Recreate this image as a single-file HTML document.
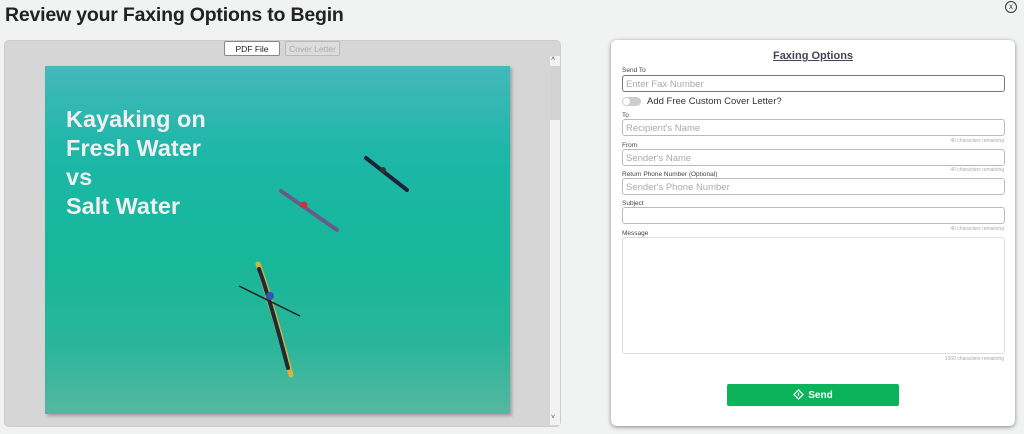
<!DOCTYPE html>
<html><head><style>
*{box-sizing:border-box;margin:0;padding:0}
body{width:1024px;height:434px;background:#f1f2f2;font-family:"Liberation Sans",sans-serif;position:relative;overflow:hidden}
.abs{position:absolute}
h1{position:absolute;left:5px;top:4px;font-size:19.5px;font-weight:bold;color:#222;letter-spacing:-0.2px}
.lab{position:absolute;left:622px;font-size:6.5px;color:#444}
.inp{position:absolute;left:622px;width:383px;height:17px;border:1px solid #999;border-radius:3px;font-size:9.5px;color:#aaa;padding:3px 0 0 3px;background:#fff}
.cr{position:absolute;right:20px;font-size:5px;color:#aaa}
.tab{position:absolute;top:41px;height:15px;font-size:8.5px;text-align:center;padding-top:2px;border-radius:2px}
</style></head><body>
<h1>Review your Faxing Options to Begin</h1>
<div class="abs" style="left:1005px;top:1px;width:12px;height:12px;border:1px solid #333;border-radius:50%;font-size:8px;text-align:center;line-height:9px;color:#333">x</div>

<div class="abs" style="left:4px;top:40px;width:557px;height:387px;background:#d6d6d6;border-radius:5px;border:1px solid #ccc"></div>
<div class="tab" style="left:224px;width:56px;background:#fff;border:1px solid #888;color:#222">PDF File</div>
<div class="tab" style="left:285px;width:55px;background:#ddd;border:1px solid #bbb;color:#aaa">Cover Letter</div>
<div class="abs" style="left:550px;top:56px;width:10px;height:369px;background:#f2f2f2"></div>
<div class="abs" style="left:550px;top:66px;width:10px;height:54px;background:#d2d2d2"></div>
<div class="abs" style="left:551px;top:56px;font-size:7px;color:#555">&#708;</div>
<div class="abs" style="left:551px;top:414px;font-size:7px;color:#555">&#709;</div>

<div class="abs" style="left:45px;top:66px;width:465px;height:348px;background:linear-gradient(180deg,#45b8bb 0%,#1cb7a7 25%,#16b79a 55%,#2ab59a 80%,#55b8a0 100%);box-shadow:2px 2px 3px rgba(0,0,0,.25);overflow:hidden">
<div class="abs" style="left:21px;top:39px;color:#f0f0f0;font-weight:bold;font-size:23.5px;line-height:29px">Kayaking on<br>Fresh Water<br>vs<br>Salt Water</div>
<svg class="abs" style="left:0;top:0" width="465" height="348">
<path d="M213 198 Q222 220 246 309 Q232 260 213 198Z" fill="#d6b43a" stroke="#d6b43a" stroke-width="5" stroke-linejoin="round"/>
<path d="M214 203 Q224 230 243 302" stroke="#1c2a3a" stroke-width="4" fill="none" stroke-linecap="round"/>
<line x1="194" y1="220" x2="255" y2="250" stroke="#222" stroke-width="1.5"/>
<circle cx="225" cy="230" r="4" fill="#2a5ab0"/>
<line x1="236" y1="125" x2="292" y2="164" stroke="#6a5a8a" stroke-width="4" stroke-linecap="round"/>
<circle cx="259" cy="139" r="3.5" fill="#c33"/>
<line x1="321" y1="92" x2="362" y2="124" stroke="#1c2338" stroke-width="4" stroke-linecap="round"/>
<circle cx="338" cy="104" r="3" fill="#333"/>
</svg>
</div>

<div class="abs" style="left:611px;top:40px;width:404px;height:386px;background:#fff;border-radius:6px;box-shadow:0 1px 4px rgba(0,0,0,.45)"></div>
<div class="abs" style="left:611px;top:50px;width:404px;text-align:center;font-size:11px;font-weight:bold;color:#445;text-decoration:underline">Faxing Options</div>
<div class="lab" style="top:67px">Send To</div>
<div class="inp" style="top:75px;border-color:#777">Enter Fax Number</div>
<div class="abs" style="left:622px;top:97px;width:19px;height:9px;border-radius:5px;background:#ccc"></div>
<div class="abs" style="left:623px;top:98px;width:7px;height:7px;border-radius:50%;background:#fff"></div>
<div class="abs" style="left:647px;top:96px;font-size:9.5px;color:#333">Add Free Custom Cover Letter?</div>
<div class="lab" style="top:112px">To</div>
<div class="inp" style="top:119px;border-color:#bbb">Recipient's Name</div>
<div class="cr" style="top:138px">40 characters remaining</div>
<div class="lab" style="top:142px">From</div>
<div class="inp" style="top:149px;border-color:#bbb">Sender's Name</div>
<div class="cr" style="top:167px">40 characters remaining</div>
<div class="lab" style="top:171px">Return Phone Number (Optional)</div>
<div class="inp" style="top:178px;border-color:#bbb">Sender's Phone Number</div>
<div class="lab" style="top:200px">Subject</div>
<div class="inp" style="top:207px;border-color:#bbb"></div>
<div class="cr" style="top:226px">40 characters remaining</div>
<div class="lab" style="top:230px">Message</div>
<div class="inp" style="top:237px;height:117px;border-color:#ddd"></div>
<div class="cr" style="top:356px">1000 characters remaining</div>
<div class="abs" style="left:727px;top:384px;width:172px;height:22px;background:#0bb35a;border-radius:2px;color:#fff;font-weight:bold;font-size:10px;text-align:center;padding-top:5px">
<svg width="11" height="11" style="vertical-align:-2px;margin-right:4px" viewBox="0 0 12 12"><path d="M6 1L11 6L6 11L1 6Z" fill="none" stroke="#fff" stroke-width="1.3"/><path d="M6 4V7.5" stroke="#fff" stroke-width="1.3"/></svg>Send</div>
</body></html>
